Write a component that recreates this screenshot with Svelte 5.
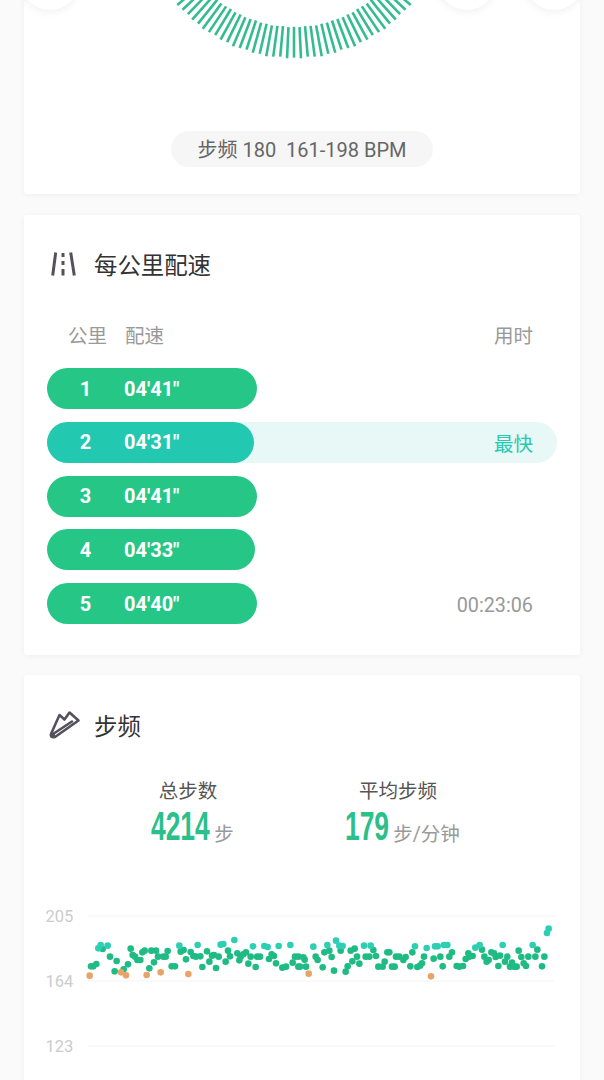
<script>
  // pace rows
  const rows = [
    { km: 1, pace: `04'41"`, width: 210 },
    { km: 2, pace: `04'31"`, width: 207, best: true },
    { km: 3, pace: `04'41"`, width: 210 },
    { km: 4, pace: `04'33"`, width: 208 },
    { km: 5, pace: `04'40"`, width: 210, time: '00:23:06' }
  ];

  // cadence ring, card coordinates
  const ringX = 270;
  const ringY = -95;
  const bars = [];
  for (let i = -36; i <= 36; i++) {
    const a = (i * 2.6 * Math.PI) / 180;
    const jitter = ((Math.abs(i) * 37 + 11) % 5) * 0.4 - 0.8;
    const outer = 153 + jitter;
    const inner = 122 + jitter * 0.5;
    bars.push({
      x1: ringX + Math.sin(a) * inner,
      y1: ringY + Math.cos(a) * inner,
      x2: ringX + Math.sin(a) * outer,
      y2: ringY + Math.cos(a) * outer
    });
  }

  // scatter points, read off as [x, y] at 3x
  const leftGreen = [[183,199],[190,199],[199,192],[218,147],[240,170],[260,183],[254,214],[281,208],[294,193],[302,146],[308,165],[315,170],[322,180],[331,180],[337,157],[344,152],[364,152],[378,152],[384,170],[372,187],[358,205],[400,170],[407,170],[413,153],[425,199],[435,199],[452,155],[461,150],[468,178],[482,156],[490,168],[498,170],[511,169],[517,201],[531,154],[546,167],[538,185],[552,165],[558,204],[566,170],[587,185],[594,152],[600,169],[622,160],[632,170],[628,181],[640,163],[648,157],[655,191],[662,170],[677,201],[681,170],[690,170],[717,177],[725,163],[732,168],[738,190],[757,203],[768,200],[788,188],[795,170],[805,170],[805,200]];
  const leftTeal = [[205,145],[212,135],[233,137],[448,137],[503,135],[572,134],[580,132],[613,120],[669,139],[703,138],[713,141],[746,138],[781,135]];
  const leftOrange = [[179,227],[273,217],[288,226],[350,225],[392,217],[475,222]];
  const rightGreen = [[10,172],[14,179],[0,200],[18,200],[47,170],[53,180],[68,202],[73,157],[88,152],[95,171],[102,212],[122,152],[137,215],[143,199],[157,184],[152,152],[164,146],[171,170],[178,191],[197,170],[208,170],[220,150],[228,168],[254,185],[235,200],[248,200],[262,157],[268,157],[276,200],[284,200],[288,170],[298,170],[310,180],[317,171],[331,199],[337,157],[352,201],[360,197],[366,190],[372,170],[401,176],[421,170],[428,199],[448,170],[456,157],[470,198],[478,200],[489,198],[497,177],[505,160],[508,170],[518,168],[546,149],[553,170],[560,185],[566,180],[574,157],[582,160],[587,171],[600,167],[595,198],[622,170],[615,185],[630,200],[636,188],[642,200],[650,200],[656,152],[664,171],[671,190],[678,198],[685,170],[706,170],[712,149],[733,170],[726,199]];
  const rightTeal = [[40,140],[82,135],[108,122],[118,137],[128,138],[192,137],[212,137],[345,139],[380,144],[405,139],[413,139],[432,135],[442,135],[526,143],[539,135],[608,135],[698,135],[741,99],[746,86]];
  const rightOrange = [[26,221],[393,229]];

  // chart svg starts at page x=24, y=900
  const left = (list, color) => list.map(([x, y]) => ({ x: x / 3 + 6, y: y / 3, color }));
  const right = (list, color) => list.map(([x, y]) => ({ x: x / 3 + 276, y: y / 3, color }));
  const dots = [
    ...left(leftGreen, '#1fbb84'),
    ...right(rightGreen, '#1fbb84'),
    ...left(leftTeal, '#2ccfb4'),
    ...right(rightTeal, '#2ccfb4'),
    ...left(leftOrange, '#e8a468'),
    ...right(rightOrange, '#e8a468')
  ];

  const gridLines = [
    { label: '205', y: 16 },
    { label: '164', y: 81 },
    { label: '123', y: 146 }
  ];
</script>

<div class="page">
  <section class="card ring-card">
    <div class="round-btns">
      <div class="round"></div>
      <div class="spacer"></div>
      <div class="round"></div>
      <div class="round"></div>
    </div>
    <svg class="ring" width="556" height="60" viewBox="0 0 556 60">
      {#each bars as b}
        <line x1={b.x1} y1={b.y1} x2={b.x2} y2={b.y2} stroke="#35bc8e" stroke-width="2.6" />
      {/each}
    </svg>
    <div class="range-pill">步频 180&nbsp;&nbsp;161-198 BPM</div>
  </section>

  <section class="card pace-card">
    <div class="card-title">
      <svg class="icon" width="36" height="30" viewBox="0 0 36 30">
        <g stroke="#55505c" stroke-width="3" fill="none">
          <path d="M9.7 3.5 L6.7 26.5" />
          <path d="M24.7 3.5 L28.3 26.5" />
          <path d="M17 4 V8 M17 12 V16 M17 20 V26.5" />
        </g>
      </svg>
      <span>每公里配速</span>
    </div>
    <div class="pace-head">
      <span class="col-km">公里</span>
      <span class="col-pace">配速</span>
      <span class="col-time">用时</span>
    </div>
    <div class="pace-list">
      {#each rows as r}
        <div class="pace-row" class:best={r.best}>
          <div class="bar" style="width: {r.width}px">
            <span class="km">{r.km}</span>
            <span class="pace">{r.pace}</span>
          </div>
          {#if r.best}
            <span class="note best-note">最快</span>
          {:else if r.time}
            <span class="note time-note">{r.time}</span>
          {/if}
        </div>
      {/each}
    </div>
  </section>

  <section class="card cadence-card">
    <div class="card-title">
      <svg class="icon" width="36" height="30" viewBox="0 0 36 30">
        <g stroke="#55505c" stroke-width="2.6" fill="none" stroke-linejoin="round" stroke-linecap="round">
          <path d="M5 24 L13.5 5 L18.5 9.5 L23.5 2.5 L32.5 10.5 L9 27 Q4 28 5 24 Z" />
          <path d="M7 24 L26 11.5" />
        </g>
        <circle cx="6.5" cy="25" r="2.6" fill="#55505c" />
      </svg>
      <span>步频</span>
    </div>
    <div class="stats">
      <div class="stat">
        <div class="stat-label">总步数</div>
        <div class="stat-value">
          <span class="num four">4214</span><span class="unit">步</span>
        </div>
      </div>
      <div class="stat">
        <div class="stat-label">平均步频</div>
        <div class="stat-value">
          <span class="num three">179</span><span class="unit">步/分钟</span>
        </div>
      </div>
    </div>
    <svg class="chart" width="556" height="180" viewBox="0 0 556 180">
      {#each gridLines as g}
        <line x1="64" x2="530" y1={g.y} y2={g.y} stroke="#f3f3f3" />
        <text x="21.5" y={g.y + 5.5} class="axis">{g.label}</text>
      {/each}
      {#each dots as d}
        <circle cx={d.x} cy={d.y} r="3.3" fill={d.color} />
      {/each}
    </svg>
  </section>
</div>

<style>
  :global(body) {
    background: #fafafa;
  }

  .page {
    display: flex;
    flex-direction: column;
    gap: 20px;
    height: 1080px;
    overflow: hidden;
    padding: 0 24px;
    font-family: Roboto, "Noto Sans CJK SC", sans-serif;
  }

  .card {
    background: #fff;
    border-radius: 3px;
    box-shadow: 0 1px 6px rgba(0, 0, 0, 0.05);
    flex-shrink: 0;
  }

  .ring-card {
    height: 194px;
    margin-bottom: 1px;
  }

  .round-btns {
    display: flex;
    gap: 27px;
    height: 0;
    margin: 0 -4px;
  }

  .round {
    width: 60px;
    height: 60px;
    margin-top: -50px;
    border-radius: 50%;
    background: #fff;
    box-shadow: 0 2px 8px rgba(0, 0, 0, 0.06);
  }

  .spacer {
    flex: 1;
  }

  .ring {
    display: block;
  }

  .range-pill {
    width: 262px;
    height: 36px;
    margin: 71px auto 0;
    border-radius: 18px;
    background: #f6f6f6;
    color: #666;
    font-size: 20px;
    line-height: 38px;
    text-align: center;
  }

  .pace-card {
    height: 440px;
    padding: 0 23px;
  }

  .card-title {
    display: flex;
    align-items: center;
    gap: 12px;
    height: 98px;
    color: #333;
    font-size: 23.4px;
  }

  .icon {
    flex-shrink: 0;
    margin-left: -1px;
  }

  .pace-head {
    display: flex;
    height: 42px;
    margin-top: 3px;
    padding: 0 24px 0 21px;
    color: #999;
    font-size: 19.5px;
    line-height: 42px;
  }

  .col-pace {
    margin-left: 18px;
  }

  .col-time {
    margin-left: auto;
  }

  .pace-list {
    display: flex;
    flex-direction: column;
    gap: 12.75px;
    margin-top: 10px;
  }

  .pace-row {
    display: flex;
    align-items: center;
    justify-content: space-between;
    height: 41px;
    border-radius: 21px;
    padding-right: 24px;
  }

  .pace-row.best {
    background: #e8f8f6;
  }

  .bar {
    display: flex;
    align-items: center;
    box-sizing: border-box;
    height: 41px;
    border-radius: 21px;
    background: #26c686;
    color: #fff;
    font-size: 20px;
    font-weight: 700;
  }

  .best .bar {
    background: #22c8b0;
  }

  .km {
    width: 77px;
    text-align: center;
  }

  .note {
    color: #999;
    font-size: 19.8px;
  }

  .best-note {
    color: #27c9b0;
    font-size: 19.5px;
  }

  .time-note {
    padding-top: 3px;
  }

  .cadence-card {
    height: 420px;
  }

  .cadence-card .card-title {
    height: 99px;
    padding-left: 23px;
  }

  .stats {
    display: flex;
    margin: 5px 0 0 59px;
  }

  .stat {
    width: 210px;
    text-align: center;
  }

  .stat-label {
    color: #555;
    font-size: 19.5px;
    line-height: 26px;
  }

  .stat-value {
    display: flex;
    align-items: baseline;
    justify-content: center;
    gap: 4px;
    height: 46px;
    padding-left: 9px;
    color: #999;
    font-size: 19.5px;
  }

  .num {
    display: inline-block;
    color: #2bbf8a;
    font-family: "Liberation Sans", sans-serif;
    font-size: 40px;
    font-weight: 700;
    line-height: 44px;
    transform-origin: left center;
    transform: translateY(-1px) scaleX(0.66);
  }

  .num.four {
    width: 59px;
  }

  .num.three {
    width: 44px;
  }

  .unit {
    white-space: nowrap;
  }

  .chart {
    display: block;
    margin-top: 49px;
  }

  .axis {
    fill: #ccc;
    font-size: 16.5px;
  }
</style>
